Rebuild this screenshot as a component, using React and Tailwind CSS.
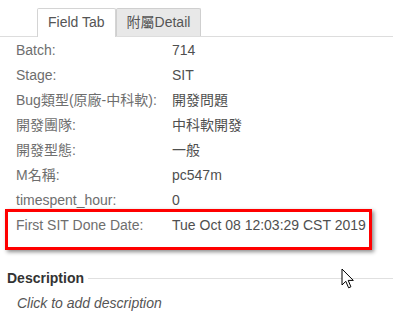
import React from "react";

const rows = [
  ["Batch:", "714"],
  ["Stage:", "SIT"],
  ["Bug類型(原廠-中科軟):", "開發問題"],
  ["開發團隊:", "中科軟開發"],
  ["開發型態:", "一般"],
  ["M名稱:", "pc547m"],
  ["timespent_hour:", "0"],
  ["First SIT Done Date:", "Tue Oct 08 12:03:29 CST 2019"],
];

export default function App() {
  return (
    <div className="relative w-[393px] h-[332px] overflow-hidden bg-white font-['Liberation_Sans','Noto_Sans_CJK_TC',sans-serif] text-[14px]">
      {/* Tabs */}
      <div className="flex items-end pt-[8px] pl-[37px] border-b border-[#dddddd] h-[37px]">
        <div className="h-[29px] -mb-px px-[10px] border border-b-0 border-[#d4d4d4] bg-white text-[#555555] leading-[27px] rounded-t-[2px]">
          Field Tab
        </div>
        <div className="h-[28px] px-[10px] border border-[#cfcfcf] border-b-0 bg-[#e8e8e8] text-[#555555] leading-[27px] rounded-t-[2px]">
          附屬Detail
        </div>
      </div>

      {/* Rows */}
      <div className="pt-px">
        {rows.map(([k, v]) => (
          <div key={k} className="flex h-[25px] leading-[25px] pl-[16px]">
            <div className="w-[156px] text-[#6e6e6e] whitespace-nowrap">{k}</div>
            <div className="text-[#4f4f4f] whitespace-nowrap">{v}</div>
          </div>
        ))}
      </div>

      {/* Description */}
      <div className="mt-[30px] flex items-center pl-[7px] h-[20px]">
        <span className="font-bold text-[#333333]">Description</span>
        <div className="ml-[4px] flex-1 h-px bg-[#e0e0e0]" />
      </div>
      <div className="mt-[5px] pl-[17px] h-[20px] leading-[20px] italic text-[#555555]">
        Click to add description
      </div>

      {/* Red annotation box */}
      <div className="absolute left-[5px] top-[209px] w-[367px] h-[41px] border-[3px] border-[#ff0000] shadow-[2px_2px_4px_rgba(0,0,0,0.45)]" />

      {/* Mouse cursor */}
      <svg
        className="absolute left-[341px] top-[268px]"
        width="14"
        height="22"
        viewBox="0 0 14 22"
      >
        <path
          d="M1 1 L1 17 L4.8 13.3 L7.6 19.8 L9.9 18.8 L7.2 12.4 L12.3 12.4 Z"
          fill="#ffffff"
          stroke="#000000"
          strokeWidth="1"
          strokeLinejoin="miter"
        />
      </svg>
    </div>
  );
}
